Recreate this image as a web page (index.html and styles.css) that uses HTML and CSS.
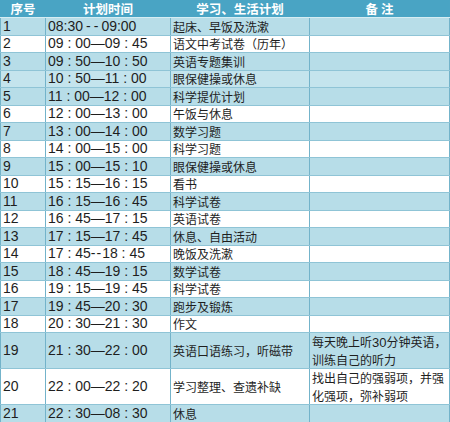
FILE: index.html
```html
<!DOCTYPE html>
<html lang="zh">
<head>
<meta charset="utf-8">
<link rel="stylesheet" href="styles.css">
</head>
<body>
<table class="plan">
  <colgroup>
    <col class="c1"><col class="c2"><col class="c3"><col class="c4">
  </colgroup>
  <thead>
    <tr class="head"><th>序号</th><th>计划时间</th><th>学习、生活计划</th><th>备 注</th></tr>
  </thead>
  <tbody>
    <tr class="b"><td class="n">1</td><td class="t">08:30<span class="dd">--</span>09:00</td><td>起床、早饭及洗漱</td><td></td></tr>
    <tr class="w"><td class="n">2</td><td class="t">09 : 00—09 : 45</td><td>语文中考试卷（历年）</td><td></td></tr>
    <tr class="b"><td class="n">3</td><td class="t">09 : 50—10 : 50</td><td>英语专题集训</td><td></td></tr>
    <tr class="bl"><td class="n">4</td><td class="t">10 : 50—11 : 00</td><td>眼保健操或休息</td><td></td></tr>
    <tr class="b"><td class="n">5</td><td class="t">11 : 00—12 : 00</td><td>科学提优计划</td><td></td></tr>
    <tr class="w"><td class="n">6</td><td class="t">12 : 00—13 : 00</td><td>午饭与休息</td><td></td></tr>
    <tr class="b"><td class="n">7</td><td class="t">13 : 00—14 : 00</td><td>数学习题</td><td></td></tr>
    <tr class="w"><td class="n">8</td><td class="t">14 : 00—15 : 00</td><td>科学习题</td><td></td></tr>
    <tr class="b"><td class="n">9</td><td class="t">15 : 00—15 : 10</td><td>眼保健操或休息</td><td></td></tr>
    <tr class="w"><td class="n">10</td><td class="t">15 : 15—16 : 15</td><td>看书</td><td></td></tr>
    <tr class="b"><td class="n">11</td><td class="t">16 : 15—16 : 45</td><td>科学试卷</td><td></td></tr>
    <tr class="w"><td class="n">12</td><td class="t">16 : 45—17 : 15</td><td>英语试卷</td><td></td></tr>
    <tr class="b"><td class="n">13</td><td class="t">17 : 15—17 : 45</td><td>休息、自由活动</td><td></td></tr>
    <tr class="w"><td class="n">14</td><td class="t">17 : 45<span class="ds">--</span>18 : 45</td><td>晚饭及洗漱</td><td></td></tr>
    <tr class="b"><td class="n">15</td><td class="t">18 : 45—19 : 15</td><td>数学试卷</td><td></td></tr>
    <tr class="w"><td class="n">16</td><td class="t">19 : 15—19 : 45</td><td>科学试卷</td><td></td></tr>
    <tr class="b"><td class="n">17</td><td class="t">19 : 45—20 : 30</td><td>跑步及锻炼</td><td></td></tr>
    <tr class="w"><td class="n">18</td><td class="t">20 : 30—21 : 30</td><td>作文</td><td></td></tr>
    <tr class="b tall"><td class="n">19</td><td class="t">21 : 30—22 : 00</td><td>英语口语练习，听磁带</td><td class="note"><span class="ln">每天晚上听<span class="lat">30</span>分钟英语，</span><span class="ln">训练自己的听力</span></td></tr>
    <tr class="w tall"><td class="n">20</td><td class="t">22 : 00—22 : 20</td><td>学习整理、查遗补缺</td><td class="note"><span class="ln">找出自己的强弱项，并强</span><span class="ln">化强项，弥补弱项</span></td></tr>
    <tr class="b"><td class="n">21</td><td class="t">22 : 30—08 : 30</td><td>休息</td><td></td></tr>
  </tbody>
</table>
</body>
</html>
```

FILE: styles.css
```css
html, body {
  margin: 0;
  padding: 0;
  background: #ffffff;
}

.plan {
  border-collapse: collapse;
  table-layout: fixed;
  width: 449px;
  font-family: "Noto Sans CJK SC", sans-serif;
  font-size: 12px;
  color: #1e1e1e;
}

.c1 { width: 45px; }
.c2 { width: 125px; }
.c3 { width: 139px; }
.c4 { width: 140px; }

.plan th,
.plan td {
  padding: 0 2px;
  border-left: 1px solid #73b3ca;
  border-right: 1px solid #73b3ca;
  border-top: 1px solid #8fc4d6;
  border-bottom: 1px solid #8fc4d6;
  white-space: nowrap;
  overflow: hidden;
  vertical-align: middle;
  text-align: left;
  line-height: 15px;
}

.head th {
  height: 17px;
  background: #49a4c4;
  color: #ffffff;
  font-weight: bold;
  font-size: 12.5px;
  text-align: center;
  border-top: none;
  border-bottom: 1px solid #d6edf3;
  border-left: 1px solid #49a4c4;
  border-right: 1px solid #49a4c4;
}

.plan tbody td {
  height: 16.5px;
}

.plan tbody tr.tall td {
  height: 34.5px;
}

tr.b td { background: #b7dde8; }
tr.bl td { background: #c4e4ed; }
tr.w td { background: #ffffff; }

.n,
.t {
  font-family: "Liberation Sans", "Noto Sans CJK SC", sans-serif;
  font-size: 14px;
}

.dd {
  letter-spacing: 3px;
  padding-left: 3px;
}

.ds {
  letter-spacing: 1px;
}

.note {
  padding-right: 0 !important;
}

.ln {
  display: block;
  line-height: 17.5px;
}

.lat {
  font-family: "Liberation Sans", sans-serif;
  font-size: 13px;
  line-height: 1;
}
```
